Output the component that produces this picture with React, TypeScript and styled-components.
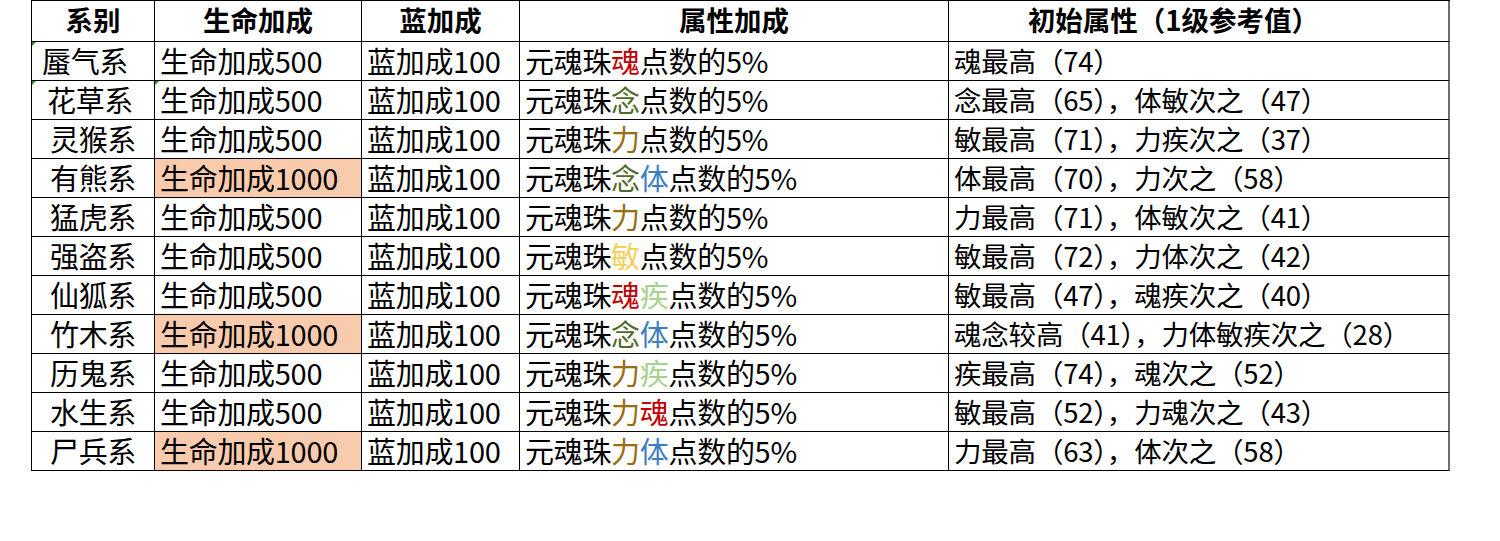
import styled, { createGlobalStyle } from "styled-components";

const GlobalStyle = createGlobalStyle`
  html, body {
    margin: 0;
    padding: 0;
    background: #ffffff;
  }
  body {
    font-family: "Noto Sans CJK SC", "Noto Sans", sans-serif;
    color: #000;
  }
`;

const Page = styled.div`
  width: 1500px;
  height: 541px;
  padding-left: 31px;
  box-sizing: border-box;
`;

const Grid = styled.div`
  display: grid;
  grid-template-columns: 123px 207px 158px 429px 501px;
  grid-auto-rows: 39px;
  grid-template-rows: 41px;
  border-top: 1px solid #000;
  border-left: 1px solid #000;
  width: max-content;
`;

const Cell = styled.div<{
  $head?: boolean;
  $center?: boolean;
  $fill?: boolean;
  $last?: boolean;
  $mark?: boolean;
  $shift?: number;
}>`
  position: relative;
  display: flex;
  align-items: center;
  justify-content: ${(p) => (p.$head || p.$center ? "center" : "flex-start")};
  padding: ${(p) =>
    p.$head
      ? `0 ${p.$shift ?? 0}px 2px 0`
      : p.$center
      ? `0 ${p.$shift ?? 0}px 1px 0`
      : "0 0 1px 5px"};
  box-sizing: border-box;
  border-right: ${(p) => (p.$last ? "2px solid #6e6e6e" : "1px solid #000")};
  border-bottom: 1px solid #000;
  background: ${(p) => (p.$fill ? "#f8cbad" : "transparent")};
  font-size: ${(p) => (p.$head ? "27.5px" : p.$last ? "27.5px" : "29px")};
  font-weight: ${(p) => (p.$head ? 700 : 400)};
  white-space: nowrap;
  line-height: 1;
  letter-spacing: ${(p) => (p.$head ? "0" : p.$last ? "-0.2px" : "-0.3px")};

  &::before {
    content: "";
    display: ${(p) => (p.$mark ? "block" : "none")};
    position: absolute;
    left: 0;
    top: 0;
    width: 0;
    height: 0;
    border-top: 4px solid #2e8b2e;
    border-right: 4px solid transparent;
  }
`;

const Tint = styled.span<{ $c: string }>`
  color: ${(p) => p.$c};
`;

const colors: Record<string, string> = {
  魂: "#c00000",
  念: "#4f6b2a",
  力: "#9a6d12",
  体: "#3d7fc1",
  敏: "#f5cf5c",
  疾: "#a9d18e",
};

type Row = {
  name: string;
  hp: string;
  big?: boolean;
  attrs: string;
  init: string;
  marks?: number[];
  shift?: number;
};

const rows: Row[] = [
  { name: "蜃气系", hp: "500", attrs: "魂", init: "魂最高（74）", marks: [0], shift: 16 },
  { name: "花草系", hp: "500", attrs: "念", init: "念最高（65），体敏次之（47）", marks: [0, 1], shift: 6 },
  { name: "灵猴系", hp: "500", attrs: "力", init: "敏最高（71），力疾次之（37）" },
  { name: "有熊系", hp: "1000", big: true, attrs: "念体", init: "体最高（70），力次之（58）" },
  { name: "猛虎系", hp: "500", attrs: "力", init: "力最高（71），体敏次之（41）" },
  { name: "强盗系", hp: "500", attrs: "敏", init: "敏最高（72），力体次之（42）" },
  { name: "仙狐系", hp: "500", attrs: "魂疾", init: "敏最高（47），魂疾次之（40）" },
  { name: "竹木系", hp: "1000", big: true, attrs: "念体", init: "魂念较高（41），力体敏疾次之（28）" },
  { name: "历鬼系", hp: "500", attrs: "力疾", init: "疾最高（74），魂次之（52）" },
  { name: "水生系", hp: "500", attrs: "力魂", init: "敏最高（52），力魂次之（43）" },
  { name: "尸兵系", hp: "1000", big: true, attrs: "力体", init: "力最高（63），体次之（58）" },
];

export default function App() {
  return (
    <Page>
      <GlobalStyle />
      <Grid>
        <Cell $head>系别</Cell>
        <Cell $head>生命加成</Cell>
        <Cell $head>蓝加成</Cell>
        <Cell $head>属性加成</Cell>
        <Cell $head $last $shift={50}>
          初始属性（1级参考值）
        </Cell>
        {rows.map((r) => (
          <>
            <Cell key={r.name + "a"} $center $shift={r.shift} $mark={r.marks?.includes(0)}>
              {r.name}
            </Cell>
            <Cell key={r.name + "b"} $fill={r.big} $mark={r.marks?.includes(1)}>
              生命加成{r.hp}
            </Cell>
            <Cell key={r.name + "c"}>蓝加成100</Cell>
            <Cell key={r.name + "d"}>
              元魂珠
              {r.attrs.split("").map((ch, i) => (
                <Tint key={i} $c={colors[ch]}>
                  {ch}
                </Tint>
              ))}
              点数的5%
            </Cell>
            <Cell key={r.name + "e"} $last>
              {r.init}
            </Cell>
          </>
        ))}
      </Grid>
    </Page>
  );
}
